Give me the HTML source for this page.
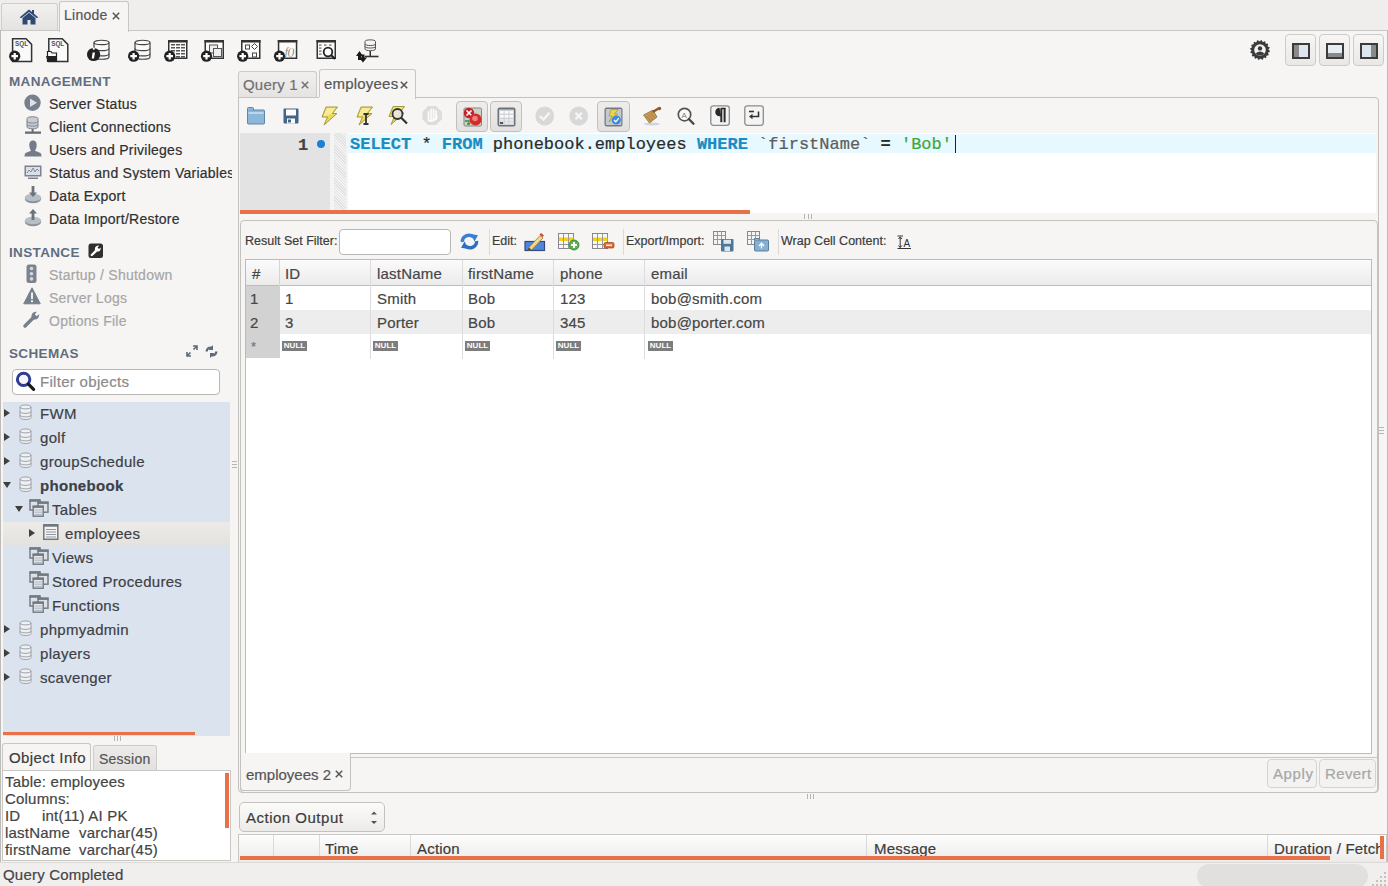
<!DOCTYPE html>
<html><head><meta charset="utf-8">
<style>
*{box-sizing:border-box;margin:0;padding:0}
html,body{width:1388px;height:886px;overflow:hidden;background:#f6f5f4;font-family:"Liberation Sans",sans-serif;font-size:14px;color:#3c3c3c;position:relative}
.a{position:absolute}
.t{position:absolute;white-space:nowrap;line-height:1;-webkit-text-stroke:0.2px currentColor}
.s{font-size:14px;letter-spacing:0.25px}
.m{font-size:15px;letter-spacing:0.2px}
.h{font-weight:bold;font-size:13.5px;color:#5f6d7f;letter-spacing:0.35px;-webkit-text-stroke:0}
.g{color:#a6a6a6}
.tr{color:#3d4046;font-size:15px;letter-spacing:0.3px}
svg{position:absolute;overflow:visible}
.gt{font-size:15px;color:#464646;letter-spacing:0.2px}
.null{position:absolute;top:341px;width:25px;height:10px;background:#7d7d7d;color:#fff;font-size:8px;font-weight:bold;line-height:10px;text-align:center;letter-spacing:0px}
</style></head><body>
<!-- ========== top tab bar ========== -->
<div class="a" style="left:0;top:0;width:1388px;height:31px;background:#efeeec"></div>
<div class="a" style="left:1px;top:3px;width:57px;height:28px;background:linear-gradient(#f2f1f0,#e3e2e0);border:1px solid #cfcdca;border-bottom:none;border-radius:3px 3px 0 0"></div>
<svg style="left:19px;top:9px" width="20" height="16" viewBox="0 0 20 16"><path d="M10 0.5 L0.5 8.5 L2.5 9 L10 3 L17.5 9 L19.5 8.5 L15 4.7 V1 h-2 v2 Z" fill="#2d4a73"/><path d="M3.5 9 L10 3.8 L16.5 9 V15.5 H11.5 V11 H8.5 V15.5 H3.5 Z" fill="#2d4a73"/></svg>
<div class="a" style="left:59px;top:1px;width:70px;height:31px;background:#f6f5f4;border:1px solid #c9c7c4;border-bottom:none;border-radius:3px 3px 0 0"></div>
<div class="t s" style="left:64px;top:8px;color:#555">Linode</div>
<svg style="left:112px;top:12px" width="8" height="8" viewBox="0 0 8 8"><path d="M0.8 0.8 L7.2 7.2 M7.2 0.8 L0.8 7.2" stroke="#555" stroke-width="1.5"/></svg>
<!-- main area border -->
<div class="a" style="left:0;top:30px;width:59px;height:1px;background:#c9c7c4"></div>
<div class="a" style="left:129px;top:30px;width:1259px;height:1px;background:#c9c7c4"></div>
<div class="a" style="left:0;top:30px;width:1px;height:832px;background:#bdbbb8"></div>

<!-- ========== sidebar ========== -->
<div class="t h" style="left:9px;top:75px">MANAGEMENT</div>
<div class="t s" style="left:49px;top:97px;color:#2f2f2f">Server Status</div>
<div class="t s" style="left:49px;top:120px;color:#2f2f2f">Client Connections</div>
<div class="t s" style="left:49px;top:143px;color:#2f2f2f">Users and Privileges</div>
<div class="t s" style="left:49px;top:166px;color:#2f2f2f;width:183px;overflow:hidden">Status and System Variables</div>
<div class="t s" style="left:49px;top:189px;color:#2f2f2f">Data Export</div>
<div class="t s" style="left:49px;top:212px;color:#2f2f2f">Data Import/Restore</div>
<div class="t h" style="left:9px;top:246px">INSTANCE</div>
<div class="t s g" style="left:49px;top:268px">Startup / Shutdown</div>
<div class="t s g" style="left:49px;top:291px">Server Logs</div>
<div class="t s g" style="left:49px;top:314px">Options File</div>
<div class="t h" style="left:9px;top:347px">SCHEMAS</div>

<!-- filter -->
<div class="a" style="left:12px;top:369px;width:208px;height:26px;background:#fff;border:1px solid #b9b7b4;border-radius:4px"></div>
<div class="t m" style="left:40px;top:374px;color:#8a8a8a;letter-spacing:0.3px">Filter objects</div>

<!-- tree -->
<div class="a" style="left:3px;top:402px;width:227px;height:334px;background:#dbe4ee"></div>
<div class="a" style="left:3px;top:522px;width:227px;height:24px;background:linear-gradient(#edebe8,#e4e2df)"></div>
<div class="t tr" style="left:40px;top:406px">FWM</div>
<div class="t tr" style="left:40px;top:430px">golf</div>
<div class="t tr" style="left:40px;top:454px">groupSchedule</div>
<div class="t tr" style="left:40px;top:478px;font-weight:bold">phonebook</div>
<div class="t tr" style="left:52px;top:502px">Tables</div>
<div class="t tr" style="left:65px;top:526px">employees</div>
<div class="t tr" style="left:52px;top:550px">Views</div>
<div class="t tr" style="left:52px;top:574px">Stored Procedures</div>
<div class="t tr" style="left:52px;top:598px">Functions</div>
<div class="t tr" style="left:40px;top:622px">phpmyadmin</div>
<div class="t tr" style="left:40px;top:646px">players</div>
<div class="t tr" style="left:40px;top:670px">scavenger</div>
<div class="a" style="left:3px;top:732px;width:192px;height:3px;background:#e9714a"></div>

<!-- object info -->
<div class="a" style="left:2px;top:743px;width:89px;height:28px;background:#f6f5f4;border:1px solid #c9c7c4;border-bottom:none;border-radius:3px 3px 0 0"></div>
<div class="a" style="left:93px;top:745px;width:64px;height:26px;background:linear-gradient(#ecebea,#e2e1df);border:1px solid #cfcdca;border-bottom:none;border-radius:3px 3px 0 0"></div>
<div class="t m" style="left:9px;top:750px;color:#3c3c3c;letter-spacing:0.4px">Object Info</div>
<div class="t s" style="left:99px;top:752px;color:#555">Session</div>
<div class="a" style="left:2px;top:770px;width:229px;height:91px;background:#fff;border:1px solid #c9c7c4"></div>
<div class="t m" style="left:5px;top:774px;color:#444">Table: employees</div>
<div class="t m" style="left:5px;top:791px;color:#444">Columns:</div>
<div class="t m" style="left:5px;top:808px;color:#444">ID</div><div class="t m" style="left:42px;top:808px;color:#444">int(11) AI PK</div>
<div class="t m" style="left:5px;top:825px;color:#444">lastName</div><div class="t m" style="left:79px;top:825px;color:#444">varchar(45)</div>
<div class="t m" style="left:5px;top:842px;color:#444">firstName</div><div class="t m" style="left:79px;top:842px;color:#444">varchar(45)</div>
<div class="a" style="left:225px;top:773px;width:4px;height:55px;background:#e9714a"></div>


<!-- ========== right area ========== -->
<!-- top-right layout buttons -->
<svg style="left:1249px;top:39px" width="22" height="22" viewBox="0 0 22 22"><path d="M19.70 11.00 L20.87 11.78 L20.71 12.93 L19.37 13.36 L19.04 14.33 L19.82 15.49 L19.23 16.50 L17.83 16.39 L17.15 17.15 L17.43 18.53 L16.50 19.23 L15.25 18.59 L14.33 19.04 L14.06 20.42 L12.93 20.71 L12.02 19.64 L11.00 19.70 L10.22 20.87 L9.07 20.71 L8.64 19.37 L7.67 19.04 L6.51 19.82 L5.50 19.23 L5.61 17.83 L4.85 17.15 L3.47 17.43 L2.77 16.50 L3.41 15.25 L2.96 14.33 L1.58 14.06 L1.29 12.93 L2.36 12.02 L2.30 11.00 L1.13 10.22 L1.29 9.07 L2.63 8.64 L2.96 7.67 L2.18 6.51 L2.77 5.50 L4.17 5.61 L4.85 4.85 L4.57 3.47 L5.50 2.77 L6.75 3.41 L7.67 2.96 L7.94 1.58 L9.07 1.29 L9.98 2.36 L11.00 2.30 L11.78 1.13 L12.93 1.29 L13.36 2.63 L14.33 2.96 L15.49 2.18 L16.50 2.77 L16.39 4.17 L17.15 4.85 L18.53 4.57 L19.23 5.50 L18.59 6.75 L19.04 7.67 L20.42 7.94 L20.71 9.07 L19.64 9.98Z" fill="#3a3a3a"/><circle cx="11" cy="11" r="5.8" fill="#f2f2f2"/><circle cx="11" cy="9.4" r="2.2" fill="#3a3a3a"/><path d="M6.8 14.2 Q11 10.6 15.2 14.2 L14 15.8 Q11 17.2 8 15.8Z" fill="#3a3a3a"/></svg>
<div class="a" style="left:1285px;top:34px;width:31px;height:32px;border:1px solid #cdcbc8;border-radius:4px;background:linear-gradient(#f7f6f5,#e9e8e6)"></div>
<div class="a" style="left:1319px;top:34px;width:31px;height:32px;border:1px solid #cdcbc8;border-radius:4px;background:linear-gradient(#f7f6f5,#e9e8e6)"></div>
<div class="a" style="left:1353px;top:34px;width:31px;height:32px;border:1px solid #cdcbc8;border-radius:4px;background:linear-gradient(#f7f6f5,#e9e8e6)"></div>
<div class="a" style="left:1292px;top:43px;width:18px;height:16px;border:2px solid #3b3b3b;background:linear-gradient(90deg,#8a8a8a 0,#8a8a8a 5px,#dde6ef 5px)"></div>
<div class="a" style="left:1326px;top:43px;width:18px;height:16px;border:2px solid #3b3b3b;background:linear-gradient(#e6eef5 0,#e6eef5 8px,#8a8a8a 8px)"></div>
<div class="a" style="left:1360px;top:43px;width:18px;height:16px;border:2px solid #3b3b3b;background:linear-gradient(90deg,#dde6ef 0,#dde6ef 9px,#8a8a8a 9px)"></div>

<!-- query tabs -->
<div class="a" style="left:238px;top:71px;width:79px;height:27px;background:linear-gradient(#f0efee,#e4e3e1);border:1px solid #cdcbc8;border-bottom:none;border-radius:3px 3px 0 0"></div>
<div class="t m" style="left:243px;top:77px;color:#707070">Query 1</div>
<svg style="left:301px;top:81px" width="8" height="8" viewBox="0 0 8 8"><path d="M0.8 0.8 L7.2 7.2 M7.2 0.8 L0.8 7.2" stroke="#707070" stroke-width="1.5"/></svg>
<div class="a" style="left:319px;top:69px;width:97px;height:30px;background:#f6f5f4;border:1px solid #c9c7c4;border-bottom:none;border-radius:3px 3px 0 0"></div>
<div class="t m" style="left:324px;top:76px;color:#555">employees</div>
<svg style="left:400px;top:81px" width="8" height="8" viewBox="0 0 8 8"><path d="M0.8 0.8 L7.2 7.2 M7.2 0.8 L0.8 7.2" stroke="#555" stroke-width="1.5"/></svg>

<!-- editor panel -->
<div class="a" style="left:238px;top:97px;width:1141px;height:696px;border:1px solid #c4c2bf;border-radius:0 4px 4px 4px"></div>
<div class="a" style="left:319px;top:97px;width:96px;height:2px;background:#f6f5f4"></div>
<!-- editor -->
<div class="a" style="left:240px;top:133px;width:1136px;height:80px;background:#fff"></div>
<div class="a" style="left:240px;top:133px;width:90px;height:80px;background:#e3e3e3"></div>
<div class="a" style="left:330px;top:133px;width:18px;height:77px;background:#f4f4f4"></div><div class="a" style="left:334px;top:133px;width:12px;height:77px;background:repeating-linear-gradient(45deg,#f3f3f3 0,#f3f3f3 1px,#e2e2e2 1px,#e2e2e2 2px)"></div>
<div class="a" style="left:348px;top:134px;width:1028px;height:19px;background:#e8f8ff"></div>
<div class="t" style="left:298px;top:137px;font-family:'Liberation Mono',monospace;font-size:17px;font-weight:bold;color:#444">1</div>
<div class="a" style="left:316.5px;top:139.5px;width:8px;height:8px;border-radius:50%;background:#1e7fd6"></div>
<div class="t" style="left:350px;top:136px;font-family:'Liberation Mono',monospace;font-size:17px;color:#2a2a2a"><b style="color:#1a8cc4">SELECT</b> * <b style="color:#1a8cc4">FROM</b> phonebook.employees <b style="color:#1a8cc4">WHERE</b> <span style="color:#5c5c5c">`firstName`</span> <b>=</b> <span style="color:#3aa83a">'Bob'</span></div>
<div class="a" style="left:955px;top:135px;width:1px;height:18px;background:#222"></div>
<div class="a" style="left:240px;top:210px;width:510px;height:4px;background:#e9714a"></div>

<!-- result panel -->
<div class="a" style="left:240px;top:220px;width:1138px;height:573px;border:1px solid #c4c2bf;border-radius:4px"></div>
<div class="t" style="left:245px;top:235px;font-size:12.5px;color:#3c3c3c">Result Set Filter:</div>
<div class="a" style="left:339px;top:229px;width:112px;height:26px;background:#fff;border:1px solid #b9b7b4;border-radius:4px"></div>
<div class="t" style="left:492px;top:235px;font-size:12.5px;color:#3c3c3c">Edit:</div>
<div class="t" style="left:626px;top:235px;font-size:12.5px;color:#3c3c3c">Export/Import:</div>
<div class="t" style="left:781px;top:235px;font-size:12.5px;color:#3c3c3c">Wrap Cell Content:</div>
<div class="a" style="left:489px;top:229px;width:1px;height:26px;background:#dcdad7"></div>
<div class="a" style="left:623px;top:229px;width:1px;height:26px;background:#dcdad7"></div>
<div class="a" style="left:778px;top:229px;width:1px;height:26px;background:#dcdad7"></div>

<!-- grid -->
<div class="a" style="left:245px;top:259px;width:1127px;height:495px;background:#fff;border:1px solid #bdbbb8"></div>
<div class="a" style="left:246px;top:260px;width:1125px;height:26px;background:linear-gradient(#fbfbfb,#ebebeb);border-bottom:1px solid #bdbdbd"></div>
<div class="a" style="left:246px;top:286px;width:34px;height:72px;background:#d2d2d2"></div>
<div class="a" style="left:280px;top:310px;width:1091px;height:24px;background:#ededed"></div>
<div class="a" style="left:279px;top:260px;width:1px;height:26px;background:#d4d4d4"></div>
<div class="a" style="left:370px;top:260px;width:1px;height:99px;background:#dcdcdc"></div>
<div class="a" style="left:462px;top:260px;width:1px;height:99px;background:#dcdcdc"></div>
<div class="a" style="left:553px;top:260px;width:1px;height:99px;background:#dcdcdc"></div>
<div class="a" style="left:644px;top:260px;width:1px;height:99px;background:#dcdcdc"></div>
<div class="t gt" style="left:252px;top:266px">#</div>
<div class="t gt" style="left:285px;top:266px">ID</div>
<div class="t gt" style="left:377px;top:266px">lastName</div>
<div class="t gt" style="left:468px;top:266px">firstName</div>
<div class="t gt" style="left:560px;top:266px">phone</div>
<div class="t gt" style="left:651px;top:266px">email</div>
<div class="t gt" style="left:250px;top:291px">1</div>
<div class="t gt" style="left:285px;top:291px">1</div>
<div class="t gt" style="left:377px;top:291px">Smith</div>
<div class="t gt" style="left:468px;top:291px">Bob</div>
<div class="t gt" style="left:560px;top:291px">123</div>
<div class="t gt" style="left:651px;top:291px">bob@smith.com</div>
<div class="t gt" style="left:250px;top:315px">2</div>
<div class="t gt" style="left:285px;top:315px">3</div>
<div class="t gt" style="left:377px;top:315px">Porter</div>
<div class="t gt" style="left:468px;top:315px">Bob</div>
<div class="t gt" style="left:560px;top:315px">345</div>
<div class="t gt" style="left:651px;top:315px">bob@porter.com</div>
<div class="t" style="left:251px;top:340px;font-size:13px;color:#777">*</div>
<div class="null" style="left:282px">NULL</div><div class="null" style="left:373px">NULL</div><div class="null" style="left:465px">NULL</div><div class="null" style="left:556px">NULL</div><div class="null" style="left:648px">NULL</div>

<!-- bottom result tab -->
<div class="a" style="left:240px;top:753px;width:111px;height:38px;background:#f6f5f4;border:1px solid #c4c2bf;border-top:none;border-radius:0 0 4px 4px"></div>
<div class="a" style="left:351px;top:757px;width:1026px;height:1px;background:#c9c7c4"></div>
<div class="t m" style="left:246px;top:767px;color:#555;letter-spacing:0px">employees 2</div>
<svg style="left:335px;top:770px" width="8" height="8" viewBox="0 0 8 8"><path d="M0.8 0.8 L7.2 7.2 M7.2 0.8 L0.8 7.2" stroke="#555" stroke-width="1.5"/></svg>
<div class="a" style="left:1267px;top:759px;width:50px;height:29px;border:1px solid #d6d4d1;border-radius:4px;background:#f3f2f1"></div>
<div class="a" style="left:1319px;top:759px;width:57px;height:29px;border:1px solid #d6d4d1;border-radius:4px;background:#f3f2f1"></div>
<div class="t m" style="left:1273px;top:766px;color:#a6a6a6;letter-spacing:0.6px">Apply</div>
<div class="t m" style="left:1325px;top:766px;color:#a6a6a6;letter-spacing:0.4px">Revert</div>

<!-- output -->
<div class="a" style="left:239px;top:802px;width:146px;height:30px;border:1px solid #c4c2bf;border-radius:5px;background:linear-gradient(#fbfbfa,#ecebea)"></div>
<div class="t m" style="left:246px;top:810px;color:#3c3c3c;letter-spacing:0.5px">Action Output</div>
<svg style="left:370px;top:809px" width="8" height="18" viewBox="0 0 8 18"><path d="M1 5.5 L4 2.5 L7 5.5Z M1 12 L4 15 L7 12Z" fill="#555"/></svg>
<div class="a" style="left:238px;top:834px;width:1149px;height:29px;border:1px solid #c9c7c4;background:linear-gradient(#fdfdfd,#ecebea)"></div>
<div class="a" style="left:273px;top:835px;width:1px;height:22px;background:#d9d9d9"></div>
<div class="a" style="left:319px;top:835px;width:1px;height:22px;background:#d9d9d9"></div>
<div class="a" style="left:410px;top:835px;width:1px;height:22px;background:#d9d9d9"></div>
<div class="a" style="left:866px;top:835px;width:1px;height:22px;background:#d9d9d9"></div>
<div class="a" style="left:1267px;top:835px;width:1px;height:22px;background:#d9d9d9"></div>
<div class="t m" style="left:325px;top:841px;color:#3c3c3c">Time</div>
<div class="t m" style="left:417px;top:841px;color:#3c3c3c">Action</div>
<div class="t m" style="left:874px;top:841px;color:#3c3c3c">Message</div>
<div class="t m" style="left:1274px;top:841px;color:#3c3c3c;width:106px;overflow:hidden">Duration / Fetch Time</div>
<div class="a" style="left:240px;top:856px;width:1090px;height:4px;background:#e9714a"></div>
<div class="a" style="left:1380px;top:836px;width:4px;height:23px;background:#e9714a"></div>


<!-- ========== icons ========== -->
<svg width="0" height="0" style="left:0;top:0">
<defs>
<g id="plus"><circle cx="0" cy="0" r="5.6" fill="#222"/><path d="M-3.3 -1.1h2.2v-2.2h2.2v2.2h2.2v2.2h-2.2v2.2h-2.2v-2.2h-2.2z" fill="#fff"/></g>
<g id="win"><rect x="0.75" y="0.75" width="18" height="17.5" fill="#fbfbfb" stroke="#333" stroke-width="1.5"/><rect x="0" y="0" width="19.5" height="2.5" fill="#333"/></g>
<g id="db"><path d="M1 3.5 C1 0.5 16 0.5 16 3.5 V18 C16 21 1 21 1 18 Z" fill="#f8f8f8" stroke="#444" stroke-width="1.2"/><path d="M1 3.5 C1 6.3 16 6.3 16 3.5 M1 9.5 C1 12.3 16 12.3 16 9.5 M1 14.8 C1 17.6 16 17.6 16 14.8" fill="none" stroke="#444" stroke-width="1.2"/></g>
<g id="sdb"><path d="M1 3 C1 0.3 12 0.3 12 3 V13.5 C12 16.2 1 16.2 1 13.5 Z" fill="#eef0f2" stroke="#9aa0a8" stroke-width="1"/><path d="M1 3 C1 5.5 12 5.5 12 3 M1 7.5 C1 10 12 10 12 7.5 M1 11 C1 13.5 12 13.5 12 11" fill="none" stroke="#9aa0a8" stroke-width="1"/></g>
<g id="folder"><rect x="0.5" y="3" width="17" height="14" rx="1" fill="#8cb6da" stroke="#5f86a8"/><path d="M0.5 4 V1.5 Q0.5 0.5 1.5 0.5 H5.5 Q6.5 0.5 6.5 1.5 V3" fill="#8cb6da" stroke="#5f86a8"/><rect x="1.5" y="5" width="15" height="2" fill="#bcd8ee"/></g>
<g id="grp"><rect x="1" y="1" width="10" height="10" fill="#dde2e8" stroke="#6f7780" stroke-width="1.4"/><rect x="0.5" y="0.5" width="11" height="2.2" fill="#6f7780"/><rect x="9" y="3.2" width="10" height="10" fill="#dde2e8" stroke="#6f7780" stroke-width="1.4"/><rect x="8.5" y="2.7" width="11" height="2.2" fill="#6f7780"/><rect x="4.2" y="7.2" width="10" height="10" fill="#e6e9ee" stroke="#6f7780" stroke-width="1.4"/><rect x="3.7" y="6.7" width="11" height="2.2" fill="#6f7780"/><path d="M5.5 11 H13 M5.5 13.2 H13 M5.5 15.4 H13" stroke="#aab0b8" stroke-width="0.9"/></g>
<g id="lightning"><path d="M5 0.5 H16.5 L11.5 7 H16 L3 18.5 L6.5 10.5 H1 Z" fill="#ecd85a" stroke="#a8983a" stroke-width="1" stroke-linejoin="round"/><path d="M6 1.5 H14.5 L10 7.5 L5 9.5 H2.5Z" fill="#f6eb9a"/></g>
<g id="tri"><path d="M0 0 L6 4 L0 8Z" fill="#3f3f3f"/></g>
<g id="trid"><path d="M0 0 L8 0 L4 6Z" fill="#3f3f3f"/></g>
</defs></svg>

<!-- main toolbar -->
<svg style="left:9px;top:38px" width="24" height="25" viewBox="0 0 24 25"><path d="M3.6 0.8 H17 L22.6 6.4 V23.6 H3.6 Z" fill="#fafafa" stroke="#333" stroke-width="1.5"/><text x="6" y="8.4" font-family="Liberation Sans" font-weight="bold" font-size="7.6" textLength="13" lengthAdjust="spacingAndGlyphs" fill="#505050">SQL</text><use href="#plus" x="5.7" y="18.2"/></svg>
<svg style="left:45px;top:38px" width="25" height="25" viewBox="0 0 25 25"><path d="M3.8 0.8 H17.2 L22.8 6.4 V23.6 H3.8 Z" fill="#fafafa" stroke="#333" stroke-width="1.5"/><text x="6.2" y="8.4" font-family="Liberation Sans" font-weight="bold" font-size="7.6" textLength="13" lengthAdjust="spacingAndGlyphs" fill="#505050">SQL</text><path d="M2.5 13.5 H6 L7 15 H11.5 V23.5 H2.5Z" fill="#fafafa" stroke="#222" stroke-width="1.2"/><path d="M1 18 H11.5 V23.5 H2.5Z" fill="#222"/></svg>
<svg style="left:86px;top:38px" width="26" height="24" viewBox="0 0 26 24"><use href="#db" x="7" y="1"/><circle cx="7.6" cy="16.5" r="6.6" fill="#222"/><path d="M7.8 11.8 a1.1 1.1 0 1 1 0.01 0Z M6.6 14.5 h2.4 l-1 6 h-2.3z" fill="#fff"/></svg>
<svg style="left:128px;top:38px" width="25" height="24" viewBox="0 0 25 24"><use href="#db" x="6" y="1"/><use href="#plus" x="5.6" y="18.2"/></svg>
<svg style="left:163px;top:39px" width="26" height="24" viewBox="0 0 26 24"><use href="#win" x="5" y="1"/><g fill="#555"><rect x="8" y="5" width="4" height="1.5"/><rect x="13" y="5" width="4" height="1.5"/><rect x="18" y="5" width="4" height="1.5"/><rect x="8" y="8" width="4" height="1.5"/><rect x="13" y="8" width="4" height="1.5"/><rect x="18" y="8" width="4" height="1.5"/><rect x="8" y="11" width="4" height="1.5"/><rect x="13" y="11" width="4" height="1.5"/><rect x="18" y="11" width="4" height="1.5"/><rect x="13" y="14" width="4" height="1.5"/><rect x="18" y="14" width="4" height="1.5"/><rect x="13" y="17" width="4" height="1.5"/><rect x="18" y="17" width="4" height="1.5"/></g><use href="#plus" x="6.7" y="17.2"/></svg>
<svg style="left:200px;top:39px" width="26" height="24" viewBox="0 0 26 24"><use href="#win" x="4.5" y="1"/><rect x="9.5" y="6" width="8" height="8" fill="#eee" stroke="#555"/><rect x="13.5" y="9.5" width="8" height="8" fill="#eee" stroke="#555"/><use href="#plus" x="6.5" y="17.2"/></svg>
<svg style="left:237px;top:39px" width="26" height="24" viewBox="0 0 26 24"><use href="#win" x="4" y="1"/><rect x="8.5" y="6" width="4" height="4" fill="#fff" stroke="#444"/><path d="M17.5 4.5 L20.5 7.5 L17.5 10.5 L14.5 7.5Z" fill="#fff" stroke="#444"/><rect x="15.5" y="14" width="4" height="4" fill="#fff" stroke="#444"/><use href="#plus" x="5.7" y="17.2"/></svg>
<svg style="left:274px;top:39px" width="26" height="24" viewBox="0 0 26 24"><use href="#win" x="3.8" y="1"/><text x="11" y="15.5" font-family="Liberation Serif" font-style="italic" font-size="10" fill="#777">f()</text><use href="#plus" x="5.5" y="17.2"/></svg>
<svg style="left:315px;top:39px" width="23" height="23" viewBox="0 0 23 23"><use href="#win" x="1.5" y="1"/><g fill="#666"><rect x="4" y="5.5" width="2.5" height="1.2"/><rect x="9" y="5.5" width="2.5" height="1.2"/><rect x="14" y="5.5" width="2.5" height="1.2"/><rect x="4" y="8.5" width="2.5" height="1.2"/><rect x="4" y="11.5" width="2.5" height="1.2"/><rect x="4" y="14.5" width="2.5" height="1.2"/></g><circle cx="13" cy="13" r="4.3" fill="#fff" stroke="#222" stroke-width="1.8"/><path d="M16 16 L20 20" stroke="#222" stroke-width="2.2"/></svg>
<svg style="left:355px;top:39px" width="25" height="24" viewBox="0 0 25 24"><path d="M10 2.5 C10 0.3 20.5 0.3 20.5 2.5 V10 C20.5 12.2 10 12.2 10 10Z" fill="#f4f4f4" stroke="#555" stroke-width="1"/><path d="M10 5 C10 7 20.5 7 20.5 5 M10 7.5 C10 9.5 20.5 9.5 20.5 7.5" fill="none" stroke="#555" stroke-width="1"/><rect x="14.5" y="12" width="1.5" height="5" fill="#333"/><path d="M10 17.5 H23.5" stroke="#333" stroke-width="1.6"/><path d="M1 17 L4.5 12 L8 17 H6 V21 H3 V17Z" fill="#1a1a1a"/><path d="M6.5 15.5 H9.5 V18.5 H12 L8 23.5 L4 18.5 H6.5Z" fill="#1a1a1a"/></svg>

<!-- sidebar icons -->
<svg style="left:24px;top:94px" width="18" height="18" viewBox="0 0 18 18"><circle cx="8.5" cy="8.7" r="8.2" fill="#77808c"/><path d="M6 4.5 L13 8.7 L6 12.9Z" fill="#dfe3e8"/></svg>
<svg style="left:24px;top:116px" width="18" height="20" viewBox="0 0 18 20"><path d="M3 2.5 C3 0.2 14 0.2 14 2.5 V11 C14 13.3 3 13.3 3 11Z" fill="#c8ccd2" stroke="#7d858f"/><path d="M3 5.5 C3 7.6 14 7.6 14 5.5 M3 8.5 C3 10.6 14 10.6 14 8.5" fill="none" stroke="#7d858f"/><rect x="7.6" y="13" width="2" height="3" fill="#666e78"/><rect x="1" y="15.5" width="16" height="2.3" fill="#666e78"/></svg>
<svg style="left:24px;top:140px" width="18" height="18" viewBox="0 0 18 18"><path d="M9 0.5 C12 0.5 13 3 12.6 6.5 C12.3 8.5 11.5 10 11 10.8 L16.5 13 Q17.5 13.5 17.5 16.5 H0.5 Q0.5 13.5 1.5 13 L7 10.8 C6.5 10 5.7 8.5 5.4 6.5 C5 3 6 0.5 9 0.5Z" fill="#737c88"/></svg>
<svg style="left:24px;top:165px" width="18" height="15" viewBox="0 0 18 15"><rect x="0.5" y="0.5" width="17" height="11" fill="#7a838e"/><rect x="2" y="2" width="14" height="8" fill="#d9e0e8"/><path d="M3 8 L5 5 L7 7 L9 3 L11 7 L13 4 L15 6" fill="none" stroke="#7a838e" stroke-width="0.9"/><rect x="4" y="12.5" width="10" height="1.5" fill="#7a838e"/></svg>
<svg style="left:24px;top:185px" width="18" height="19" viewBox="0 0 18 19"><ellipse cx="9" cy="14" rx="8.2" ry="4.2" fill="#8a929c"/><ellipse cx="9" cy="12.5" rx="8.2" ry="3.8" fill="#b8bec6"/><path d="M7.6 1 H10.4 V7.5 H13 L9 12 L5 7.5 H7.6Z" fill="#6a727d"/></svg>
<svg style="left:24px;top:208px" width="18" height="19" viewBox="0 0 18 19"><ellipse cx="9" cy="14" rx="8.2" ry="4.2" fill="#8a929c"/><ellipse cx="9" cy="12.5" rx="8.2" ry="3.8" fill="#b8bec6"/><path d="M7.6 12 H10.4 V5.5 H13 L9 1 L5 5.5 H7.6Z" fill="#6a727d"/></svg>
<svg style="left:88px;top:243px" width="16" height="16" viewBox="0 0 16 16"><rect x="0.5" y="0.5" width="14.5" height="14.5" rx="2.5" fill="#2f2f2f"/><path d="M3.8 12 L8 7.8" stroke="#fff" stroke-width="2.4" stroke-linecap="round"/><path d="M6.8 6.5 Q6.8 2.5 11.2 2.6 L9.6 4.4 L11 5.9 L12.8 4.4 Q13 8.7 8.8 8.6Z" fill="#fff"/></svg>
<svg style="left:25px;top:264px" width="14" height="20" viewBox="0 0 14 20"><rect x="1.5" y="0.5" width="10" height="18.5" rx="2.5" fill="#7a838e"/><circle cx="6.5" cy="4.5" r="1.8" fill="#d4d8dd"/><circle cx="6.5" cy="9.7" r="1.8" fill="#d4d8dd"/><circle cx="6.5" cy="14.9" r="1.8" fill="#d4d8dd"/></svg>
<svg style="left:23px;top:287px" width="18" height="18" viewBox="0 0 18 18"><path d="M9 0.8 L17.3 16.8 H0.7Z" fill="#77808c" stroke="#77808c" stroke-linejoin="round"/><rect x="8" y="5.5" width="2" height="6.5" fill="#f0f0f0"/><rect x="8" y="13.2" width="2" height="2" fill="#f0f0f0"/></svg>
<svg style="left:23px;top:310px" width="18" height="18" viewBox="0 0 18 18"><path d="M2 16 L9.5 8.5" stroke="#77808c" stroke-width="3.5" stroke-linecap="round"/><path d="M8.3 7 Q8.5 1.5 14 1.8 L11.8 4.3 L13.7 6.3 L16.2 4 Q16.5 9.5 11 9.7Z" fill="#77808c"/></svg>
<svg style="left:186px;top:345px" width="12" height="12" viewBox="0 0 12 12"><path d="M1 11 L4.5 7.5 M7.5 4.5 L11 1 M7 1 H11 V5 M1 7 V11 H5" fill="none" stroke="#5c6a7c" stroke-width="1.6"/></svg>
<svg style="left:204px;top:345px" width="15" height="13" viewBox="0 0 15 13"><path d="M1.5 6.5 Q2 1.3 7.5 1.5 L9 0 V5 H4.5 L6 3.6 Q3.8 4 3.8 6.5Z M13.5 6.5 Q13 11.7 7.5 11.5 L6 13 V8 H10.5 L9 9.4 Q11.2 9 11.2 6.5Z" fill="#5c6a7c"/></svg>
<svg style="left:15px;top:371px" width="22" height="21" viewBox="0 0 22 21"><circle cx="8.6" cy="8.4" r="6.2" fill="#f4f6ff" stroke="#2e3d92" stroke-width="3"/><path d="M13.4 13.2 L18.6 18.4" stroke="#1a1a1a" stroke-width="3.2" stroke-linecap="round"/></svg>
<svg style="left:4px;top:409px" width="7" height="9" viewBox="0 0 7 9"><use href="#tri"/></svg>
<svg style="left:19px;top:404px" width="14" height="17" viewBox="0 0 14 17"><use href="#sdb"/></svg>
<svg style="left:4px;top:433px" width="7" height="9" viewBox="0 0 7 9"><use href="#tri"/></svg>
<svg style="left:19px;top:428px" width="14" height="17" viewBox="0 0 14 17"><use href="#sdb"/></svg>
<svg style="left:4px;top:457px" width="7" height="9" viewBox="0 0 7 9"><use href="#tri"/></svg>
<svg style="left:19px;top:452px" width="14" height="17" viewBox="0 0 14 17"><use href="#sdb"/></svg>
<svg style="left:3px;top:482px" width="9" height="7" viewBox="0 0 9 7"><use href="#trid"/></svg>
<svg style="left:19px;top:476px" width="14" height="17" viewBox="0 0 14 17"><use href="#sdb"/></svg>
<svg style="left:15px;top:506px" width="9" height="7" viewBox="0 0 9 7"><use href="#trid"/></svg>
<svg style="left:29px;top:499px" width="20" height="18" viewBox="0 0 20 18"><use href="#grp"/></svg>
<svg style="left:29px;top:529px" width="7" height="9" viewBox="0 0 7 9"><use href="#tri"/></svg>
<svg style="left:43px;top:524px" width="16" height="16" viewBox="0 0 16 16"><rect x="0.8" y="0.8" width="14" height="14.5" fill="#f4f4f4" stroke="#6f7780" stroke-width="1.5"/><rect x="0.5" y="0.5" width="14.6" height="2.2" fill="#6f7780"/><path d="M3 5.5 H13 M3 8 H13 M3 10.5 H13 M3 13 H13" stroke="#8f969e" stroke-width="1"/></svg>
<svg style="left:29px;top:547px" width="20" height="18" viewBox="0 0 20 18"><use href="#grp"/></svg>
<svg style="left:29px;top:571px" width="20" height="18" viewBox="0 0 20 18"><use href="#grp"/></svg>
<svg style="left:29px;top:595px" width="20" height="18" viewBox="0 0 20 18"><use href="#grp"/></svg>
<svg style="left:4px;top:625px" width="7" height="9" viewBox="0 0 7 9"><use href="#tri"/></svg>
<svg style="left:19px;top:620px" width="14" height="17" viewBox="0 0 14 17"><use href="#sdb"/></svg>
<svg style="left:4px;top:649px" width="7" height="9" viewBox="0 0 7 9"><use href="#tri"/></svg>
<svg style="left:19px;top:644px" width="14" height="17" viewBox="0 0 14 17"><use href="#sdb"/></svg>
<svg style="left:4px;top:673px" width="7" height="9" viewBox="0 0 7 9"><use href="#tri"/></svg>
<svg style="left:19px;top:668px" width="14" height="17" viewBox="0 0 14 17"><use href="#sdb"/></svg>

<!-- editor toolbar -->
<svg style="left:247px;top:107px" width="19" height="18" viewBox="0 0 19 18"><use href="#folder"/></svg>
<svg style="left:283px;top:108px" width="16" height="16" viewBox="0 0 16 16"><rect x="0.5" y="0.5" width="15" height="15" rx="1" fill="#426685"/><rect x="3" y="1.5" width="10" height="6" fill="#fff"/><rect x="4" y="10.5" width="8" height="5" fill="#fff"/><rect x="5" y="11.5" width="3" height="3" fill="#426685"/></svg>
<svg style="left:321px;top:106px" width="18" height="20" viewBox="0 0 18 20"><use href="#lightning" x="0" y="0.5"/></svg>
<svg style="left:356px;top:106px" width="18" height="20" viewBox="0 0 18 20"><use href="#lightning" x="0" y="0.5"/><path d="M7.5 8 h5 M10 8 V18 M7.5 18 h5" stroke="#333" stroke-width="1.8"/></svg>
<svg style="left:388px;top:105px" width="21" height="21" viewBox="0 0 21 21"><use href="#lightning" x="0" y="1"/><circle cx="9.5" cy="9" r="5" fill="#e8e8e8" stroke="#333" stroke-width="1.8" fill-opacity="0.8"/><path d="M13 12.5 L19 18.5" stroke="#333" stroke-width="2.2"/></svg>
<svg style="left:422px;top:105px" width="21" height="21" viewBox="0 0 21 21"><path d="M6 1 H14 L20 7 V14 L14 20 H6 L0.5 14 V7Z" fill="#dcdcdc"/><path d="M6.5 15 V7 M9 14 V4.5 M11.5 14 V4.5 M14 14 V6" stroke="#fafafa" stroke-width="1.8" stroke-linecap="round"/><path d="M6 15 Q10 18 14.5 13 V10" stroke="#fafafa" stroke-width="2" fill="none"/></svg>
<div class="a" style="left:456px;top:101px;width:32px;height:31px;border:1px solid #c2c0bd;border-radius:4px;background:linear-gradient(#eeedec,#e2e1df)"></div>
<div class="a" style="left:490px;top:101px;width:32px;height:31px;border:1px solid #c2c0bd;border-radius:4px;background:linear-gradient(#eeedec,#e2e1df)"></div>
<div class="a" style="left:597px;top:101px;width:33px;height:31px;border:1px solid #c2c0bd;border-radius:4px;background:linear-gradient(#eeedec,#e2e1df)"></div>
<svg style="left:463px;top:107px" width="20" height="20" viewBox="0 0 20 20"><rect x="0.5" y="0.5" width="18.5" height="19" rx="2" fill="#7f8a7f"/><rect x="1.5" y="1.5" width="16.5" height="17" fill="#c9d4c4"/><circle cx="6" cy="6" r="5.2" fill="#c8202a"/><path d="M3.5 3.5 L8.5 8.5 M8.5 3.5 L3.5 8.5" stroke="#fff" stroke-width="1.6"/><circle cx="12.5" cy="12.5" r="6" fill="#d42a2a"/><circle cx="12" cy="11.5" r="2.8" fill="#f08080"/><path d="M2 14 H6 V17 M4 17 H7" stroke="#3a8a3a" stroke-width="1.3" fill="none"/></svg>
<svg style="left:497px;top:107px" width="19" height="20" viewBox="0 0 19 20"><rect x="0.5" y="0.5" width="18" height="19" rx="2" fill="#6e737a"/><rect x="2" y="2.5" width="15" height="15.5" fill="#cfd3d8"/><g fill="#fafafa"><rect x="3" y="4" width="3.6" height="2.6"/><rect x="7.7" y="4" width="3.6" height="2.6"/><rect x="12.4" y="4" width="3.6" height="2.6"/><rect x="3" y="8" width="3.6" height="2.6"/><rect x="7.7" y="8" width="3.6" height="2.6"/><rect x="12.4" y="8" width="3.6" height="2.6"/></g><g fill="#e6e8ea"><rect x="3" y="12" width="3.6" height="2.4"/><rect x="7.7" y="12" width="3.6" height="2.4"/><rect x="12.4" y="12" width="3.6" height="2.4"/><rect x="7.7" y="15" width="3.6" height="2.2"/><rect x="12.4" y="15" width="3.6" height="2.2"/></g><rect x="3" y="15" width="3" height="2" fill="#555"/></svg>
<svg style="left:535px;top:106px" width="20" height="20" viewBox="0 0 20 20"><circle cx="9.7" cy="10" r="9.4" fill="#d8d8d8"/><path d="M5 10 L8.5 13.5 L14.5 6.8" stroke="#f6f6f6" stroke-width="2.3" fill="none"/></svg>
<svg style="left:569px;top:106px" width="20" height="20" viewBox="0 0 20 20"><circle cx="9.7" cy="10" r="9.4" fill="#d8d8d8"/><path d="M6.5 6.8 L12.9 13.2 M12.9 6.8 L6.5 13.2" stroke="#f6f6f6" stroke-width="2.3"/></svg>
<svg style="left:604px;top:107px" width="19" height="20" viewBox="0 0 19 20"><rect x="0.5" y="0.5" width="18" height="19" rx="2" fill="#777b80"/><rect x="1.8" y="2" width="15.5" height="16" fill="#c4c9cf"/><path d="M7 2.5 H14 L10.5 7 H13.5 L5 15 L8 9 H5Z" fill="#e8d64a" stroke="#9a8a30" stroke-width="0.6"/><circle cx="12.3" cy="13" r="4.6" fill="#3d8be0"/><path d="M10 13 L11.8 14.8 L14.8 11.2" stroke="#fff" stroke-width="1.3" fill="none"/></svg>
<svg style="left:642px;top:106px" width="21" height="20" viewBox="0 0 21 20"><ellipse cx="10" cy="18" rx="8" ry="1.5" fill="#d0d4dc"/><path d="M1.5 9 L11 4 L15 11 L7.5 17Z" fill="#c69a55" stroke="#95703a" stroke-width="0.8"/><path d="M4 10 L9.5 15.5 M6 8.5 L11 14 M8.5 7 L13 12" stroke="#95703a" stroke-width="0.6"/><path d="M11.5 5.5 L16.5 2.5" stroke="#8a5a2a" stroke-width="2.5" stroke-linecap="round"/><circle cx="17.5" cy="2.5" r="1.7" fill="#8a5a2a"/></svg>
<svg style="left:676px;top:107px" width="20" height="19" viewBox="0 0 20 19"><circle cx="8.5" cy="7.6" r="6.2" fill="#fafafa" stroke="#555" stroke-width="1.7"/><text x="5.6" y="10.8" font-family="Liberation Sans" font-size="8" fill="#777">A</text><path d="M12.8 12 L17.5 16.8" stroke="#444" stroke-width="2.3" stroke-linecap="round"/></svg>
<svg style="left:710px;top:105px" width="21" height="22" viewBox="0 0 21 22"><rect x="0.8" y="0.8" width="18.5" height="19.5" rx="2.5" fill="linear" style="fill:#f4f4f4" stroke="#8b8b8b" stroke-width="1.3"/><path d="M11 3.5 H15.5 M9.5 3.5 A3.4 3.4 0 0 0 9.5 10.5 H11" fill="#2a2a2a" stroke="#2a2a2a" stroke-width="1.5"/><path d="M9.5 4 A3 3 0 0 0 9.5 10 Z" fill="#2a2a2a"/><rect x="10.3" y="3.2" width="2" height="14" fill="#2a2a2a"/><rect x="13.6" y="3.2" width="2" height="14" fill="#2a2a2a"/></svg>
<svg style="left:744px;top:105px" width="21" height="22" viewBox="0 0 21 22"><rect x="0.8" y="0.8" width="18.5" height="19.5" rx="2.5" style="fill:#f4f4f4" stroke="#8b8b8b" stroke-width="1.3"/><path d="M5 6.5 H10" stroke="#333" stroke-width="1.6"/><path d="M14.5 6.5 V11.5 H8" stroke="#333" stroke-width="1.6" fill="none"/><path d="M5 11.5 L8.5 8.8 V14.2Z" fill="#333"/></svg>

<!-- result toolbar icons -->
<svg style="left:459px;top:233px" width="21" height="17" viewBox="0 0 21 17"><path d="M3.5 9 A6.5 6 0 0 1 14.5 4" fill="none" stroke="#3b7fd3" stroke-width="3.4"/><path d="M11.5 1 L19 2.2 L15.5 8.6Z" fill="#3b7fd3"/><path d="M17.5 8 A6.5 6 0 0 1 6.5 13" fill="none" stroke="#2f6fc0" stroke-width="3.4"/><path d="M9.5 16 L2 14.8 L5.5 8.4Z" fill="#2f6fc0"/></svg>
<svg style="left:524px;top:232px" width="22" height="20" viewBox="0 0 22 20"><rect x="1" y="9.5" width="19.5" height="9" fill="#4f86d8" stroke="#334a80" stroke-width="1.2"/><path d="M5 15.5 L16 3.5 L19 6 L8 17.5 L4 18Z" fill="#f2d884" stroke="#9a7a40" stroke-width="0.8"/><path d="M15.5 2.5 L17 1 L20 3.6 L18.5 5Z" fill="#d04040"/><path d="M4 18 L5 15.5 L7 17.5Z" fill="#333"/></svg>
<svg style="left:558px;top:233px" width="22" height="18" viewBox="0 0 22 18"><rect x="0.5" y="0.5" width="15" height="15" fill="#f8f8f8" stroke="#888"/><rect x="1" y="4.5" width="14.5" height="3.5" fill="#f0d020"/><path d="M1 11.5 H15.5 M5.5 1 V15.5 M10.5 1 V15.5" stroke="#999" stroke-width="1"/><circle cx="16" cy="12" r="5" fill="#5ab552" stroke="#2f7a2f" stroke-width="0.8"/><path d="M16 9 V15 M13 12 H19" stroke="#fff" stroke-width="2"/></svg>
<svg style="left:592px;top:233px" width="23" height="18" viewBox="0 0 23 18"><rect x="0.5" y="0.5" width="15" height="15" fill="#f8f8f8" stroke="#888"/><rect x="1" y="4.5" width="14.5" height="3.5" fill="#f0d020"/><path d="M1 11.5 H15.5 M5.5 1 V15.5 M10.5 1 V15.5" stroke="#999" stroke-width="1"/><rect x="12" y="9.5" width="10" height="5.5" rx="1.5" fill="#e06a3a" stroke="#a03a1a" stroke-width="0.7"/><path d="M14 12.2 H20" stroke="#fff" stroke-width="1.3"/></svg>
<svg style="left:713px;top:231px" width="22" height="21" viewBox="0 0 22 21"><rect x="0.5" y="0.5" width="12" height="13" fill="#f4f4f4" stroke="#888"/><path d="M0.5 4.5 H12.5 M0.5 8.5 H12.5 M4.5 0.5 V13.5 M8.5 0.5 V13.5" stroke="#999"/><rect x="8" y="8" width="12.5" height="12.5" rx="1" fill="#4d7697"/><rect x="10.5" y="8.8" width="7.5" height="4" fill="#dce6ef"/><rect x="11.5" y="15.5" width="5.5" height="4.5" fill="#dce6ef"/></svg>
<svg style="left:747px;top:231px" width="23" height="21" viewBox="0 0 23 21"><rect x="0.5" y="0.5" width="12" height="13" fill="#f4f4f4" stroke="#888"/><path d="M0.5 4.5 H12.5 M0.5 8.5 H12.5 M4.5 0.5 V13.5 M8.5 0.5 V13.5" stroke="#999"/><rect x="7.5" y="9" width="14" height="11" rx="1" fill="#86b0d0" stroke="#55809f"/><path d="M7.5 9 V7.5 H12 L13 9" fill="#86b0d0" stroke="#55809f"/><path d="M14.5 17.5 V13 M12 15 L14.5 12.2 L17 15" stroke="#fff" stroke-width="1.3" fill="none"/></svg>
<svg style="left:897px;top:235px" width="15" height="15" viewBox="0 0 15 15"><path d="M0.5 1 H6 M0.5 13.5 H14" stroke="#333" stroke-width="1.2"/><path d="M3.2 2 V12.5 M1.5 4 L3.2 2 L5 4 M1.5 10.5 L3.2 12.5 L5 10.5" stroke="#333" stroke-width="1" fill="none"/><text x="6.6" y="11.6" font-family="Liberation Sans" font-size="10" fill="#333">A</text></svg>


<!-- splitters -->
<div class="a" style="left:232px;top:461px;width:5px;height:1px;background:#b4b4b4"></div>
<div class="a" style="left:232px;top:464px;width:5px;height:1px;background:#b4b4b4"></div>
<div class="a" style="left:232px;top:467px;width:5px;height:1px;background:#b4b4b4"></div>
<div class="a" style="left:804px;top:214px;width:1px;height:5px;background:#b4b4b4"></div>
<div class="a" style="left:808px;top:214px;width:1px;height:5px;background:#b4b4b4"></div>
<div class="a" style="left:811px;top:214px;width:1px;height:5px;background:#b4b4b4"></div>
<div class="a" style="left:114px;top:736px;width:1px;height:5px;background:#b4b4b4"></div>
<div class="a" style="left:117px;top:736px;width:1px;height:5px;background:#b4b4b4"></div>
<div class="a" style="left:120px;top:736px;width:1px;height:5px;background:#b4b4b4"></div>
<div class="a" style="left:807px;top:794px;width:1px;height:5px;background:#b4b4b4"></div>
<div class="a" style="left:810px;top:794px;width:1px;height:5px;background:#b4b4b4"></div>
<div class="a" style="left:813px;top:794px;width:1px;height:5px;background:#b4b4b4"></div>
<div class="a" style="left:1379px;top:427px;width:5px;height:1px;background:#b4b4b4"></div>
<div class="a" style="left:1379px;top:430px;width:5px;height:1px;background:#b4b4b4"></div>
<div class="a" style="left:1379px;top:433px;width:5px;height:1px;background:#b4b4b4"></div>
<div class="a" style="left:1387px;top:31px;width:1px;height:831px;background:#bdbbb8"></div>
<!-- status bar -->

<div class="a" style="left:0;top:862px;width:1388px;height:24px;background:#f0efee;border-top:1px solid #dcdad7"></div>
<div class="t m" style="left:3px;top:867px;color:#444">Query Completed</div>
<div class="a" style="left:1197px;top:864px;width:171px;height:24px;background:#e1e0de;border-radius:12px"></div>
<svg style="left:1372px;top:868px" width="16" height="18" viewBox="0 0 16 18"><g fill="#c4c2bf"><rect x="12" y="4" width="2" height="2"/><rect x="8" y="8" width="2" height="2"/><rect x="12" y="8" width="2" height="2"/><rect x="4" y="12" width="2" height="2"/><rect x="8" y="12" width="2" height="2"/><rect x="12" y="12" width="2" height="2"/><rect x="0" y="16" width="2" height="2"/><rect x="4" y="16" width="2" height="2"/><rect x="8" y="16" width="2" height="2"/><rect x="12" y="16" width="2" height="2"/></g></svg>
</body></html>
